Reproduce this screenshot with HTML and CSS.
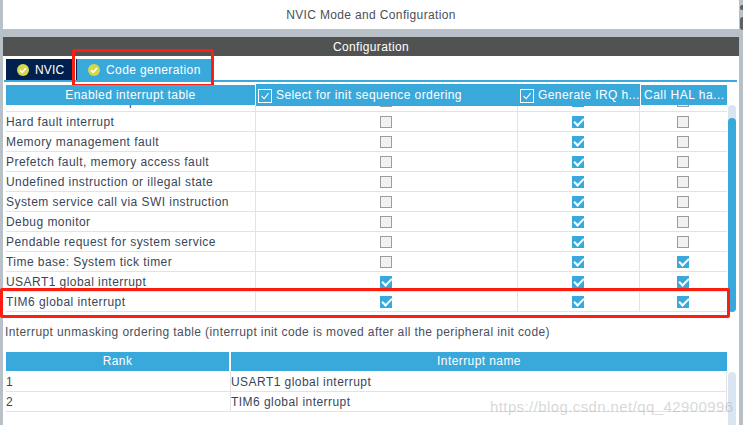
FILE: index.html
```html
<!DOCTYPE html>
<html lang="en">
<head>
<meta charset="utf-8">
<title>NVIC Mode and Configuration</title>
<link rel="stylesheet" href="styles.css">
</head>
<body>
<div class="window">
  <div class="title">NVIC Mode and Configuration</div>
  <div class="panel">
  <div class="config-bar">Configuration</div>
  <div class="tabs">
    <div class="tab tab-dark"><span class="ok"><svg viewBox="0 0 12 12"><path d="M3 6.2 5.2 8.4 9 4" /></svg></span>NVIC</div>
    <div class="tab tab-blue"><span class="ok"><svg viewBox="0 0 12 12"><path d="M3 6.2 5.2 8.4 9 4" /></svg></span>Code generation</div>
  </div>
  <div class="table-wrap">
    <div class="grid head">
      <div class="hcell center first">Enabled interrupt table</div>
      <div class="hcell wide"><span class="hbox"><svg viewBox="0 0 14 14"><path d="M3 7.2 6 10.2 11.2 3.6"/></svg></span>Select for init sequence ordering</div>
      <div class="hcell wide"><span class="hbox"><svg viewBox="0 0 14 14"><path d="M3 7.2 6 10.2 11.2 3.6"/></svg></span>Generate IRQ h...</div>
      <div class="hcell last">Call HAL ha...</div>
    </div>
    <div class="body">
      <div class="grid row clipped"><div class="cell">Non maskable interrupt</div><div class="cell mid"><i class="cb"></i></div><div class="cell mid"><i class="cb on"></i></div><div class="cell mid"><i class="cb"></i></div></div>
      <div class="grid row"><div class="cell">Hard fault interrupt</div><div class="cell mid"><i class="cb"></i></div><div class="cell mid"><i class="cb on"></i></div><div class="cell mid"><i class="cb"></i></div></div>
      <div class="grid row"><div class="cell">Memory management fault</div><div class="cell mid"><i class="cb"></i></div><div class="cell mid"><i class="cb on"></i></div><div class="cell mid"><i class="cb"></i></div></div>
      <div class="grid row"><div class="cell">Prefetch fault, memory access fault</div><div class="cell mid"><i class="cb"></i></div><div class="cell mid"><i class="cb on"></i></div><div class="cell mid"><i class="cb"></i></div></div>
      <div class="grid row"><div class="cell">Undefined instruction or illegal state</div><div class="cell mid"><i class="cb"></i></div><div class="cell mid"><i class="cb on"></i></div><div class="cell mid"><i class="cb"></i></div></div>
      <div class="grid row"><div class="cell">System service call via SWI instruction</div><div class="cell mid"><i class="cb"></i></div><div class="cell mid"><i class="cb on"></i></div><div class="cell mid"><i class="cb"></i></div></div>
      <div class="grid row"><div class="cell">Debug monitor</div><div class="cell mid"><i class="cb"></i></div><div class="cell mid"><i class="cb on"></i></div><div class="cell mid"><i class="cb"></i></div></div>
      <div class="grid row"><div class="cell">Pendable request for system service</div><div class="cell mid"><i class="cb"></i></div><div class="cell mid"><i class="cb on"></i></div><div class="cell mid"><i class="cb"></i></div></div>
      <div class="grid row"><div class="cell">Time base: System tick timer</div><div class="cell mid"><i class="cb"></i></div><div class="cell mid"><i class="cb on"></i></div><div class="cell mid"><i class="cb on"></i></div></div>
      <div class="grid row"><div class="cell">USART1 global interrupt</div><div class="cell mid"><i class="cb on"></i></div><div class="cell mid"><i class="cb on"></i></div><div class="cell mid"><i class="cb on"></i></div></div>
      <div class="grid row"><div class="cell">TIM6 global interrupt</div><div class="cell mid"><i class="cb on"></i></div><div class="cell mid"><i class="cb on"></i></div><div class="cell mid"><i class="cb on"></i></div></div>
    </div>
    <div class="scroll-track"><div class="scroll-thumb"></div></div>
  </div>
  <div class="note">Interrupt unmasking ordering table (interrupt init code is moved after all the peripheral init code)</div>
  <div class="rank-wrap">
    <div class="rank-grid rank-head"><div class="hcell center">Rank</div><div class="hcell center">Interrupt name</div></div>
    <div class="rank-grid rank-row"><div class="cell">1</div><div class="cell">USART1 global interrupt</div></div>
    <div class="rank-grid rank-row"><div class="cell">2</div><div class="cell">TIM6 global interrupt</div></div>
    <div class="rank-track"></div>
  </div>
  </div>
</div>
<div class="edge edge-a"></div>
<div class="edge edge-b"></div>
<div class="mark mark-tab"></div>
<div class="mark mark-row"></div>
<div class="watermark">https://blog.csdn.net/qq_42900996</div>
</body>
</html>
```
FILE: styles.css
```css
* { box-sizing: border-box; }
html, body { margin: 0; height: 100%; overflow: hidden; }
body {
  position: relative;
  width: 743px;
  height: 425px;
  background: #b8c1c7;
  font-family: "Liberation Sans", Arial, sans-serif;
  font-size: 12px;
  letter-spacing: 0.45px;
  color: #39465a;
}
.window { margin-left: 3px; width: 736px; height: 425px; }
.title {
  height: 29px;
  background: #fff;
  margin-bottom: 8px;
  text-align: center;
  line-height: 30px;
  color: #4a4f5c;
  letter-spacing: 0.35px;
}
.panel { background: #fff; height: 388px; }
.config-bar {
  height: 19px;
  background: #515352;
  color: #fff;
  text-align: center;
  line-height: 20px;
  letter-spacing: 0.35px;
}
.tabs {
  display: flex;
  height: 26px;
  padding: 3px 0 0 2px;
  border-bottom: 2px solid #39a9dc;
  margin: 0 2px 0 1px;
}
.tab {
  display: flex;
  align-items: center;
  height: 21px;
  color: #fff;
  padding-left: 11px;
}
.tab-dark { width: 66px; background: #02204f; letter-spacing: 0.2px; }
.tab-blue { width: 135px; background: #39a9dc; margin-left: 5px; letter-spacing: 0.4px; box-shadow: -1px 0 0 #02204f; }
.ok {
  width: 12px; height: 12px; border-radius: 50%;
  background: #d5d84a;
  margin-right: 6px;
  display: flex;
}
.ok svg { width: 12px; height: 12px; }
.ok path { fill: none; stroke: #fff; stroke-width: 1.6; }
.table-wrap { position: relative; height: 228px; margin-top: 2px; }
.grid {
  display: grid;
  grid-template-columns: 250px 262px 122px 87px;
  margin-left: 3px;
  width: 721px;
}
.head { height: 21px; position: relative; z-index: 2; }
.hcell {
  background: #39a9dc;
  color: #fff;
  display: flex;
  align-items: center;
  line-height: 19px;
  letter-spacing: 0.42px;
  white-space: nowrap;
}
.hcell.center { justify-content: center; }
.hcell.first { margin: 1px 1px 1px 0; padding-top: 1px; }
.hcell.wide { padding-left: 2px; padding-top: 1px; }
.hcell.last { margin: 1px 0 1px 1px; padding: 1px 0 0 3px; letter-spacing: 0.5px; }
.hbox {
  width: 14px; height: 14px;
  border: 1px solid #fff;
  margin-right: 4px;
  display: flex;
  flex: none;
}
.hbox svg { width: 12px; height: 12px; }
.hbox path { fill: none; stroke: #fff; stroke-width: 1.3; }
.row { height: 20px; border-bottom: 1px solid #e3e3e3; }
.clipped { height: 7px; overflow: hidden; align-items: end; }
.cell {
  height: 19px;
  display: flex;
  align-items: center;
  white-space: nowrap;
  border-right: 1px solid #e3e3e3;
}
.clipped .cell { height: 6px; overflow: hidden; align-items: flex-end; line-height: 19px; }
.cell.mid { justify-content: center; padding-right: 1px; }
.grid .cell:last-child { border-right: 0; }
.cb {
  display: block;
  width: 12px; height: 12px;
  background: #f0f1f3;
  border: 1px solid #9a9da0;
  flex: none;
}
.clipped .cb { margin-bottom: 4px; }
.cb.on {
  border: 0;
  background: #39a9dc;
  position: relative;
}
.cb.on::after {
  content: "";
  position: absolute;
  left: 2px; top: 2px;
  width: 8px; height: 4px;
  border-left: 2px solid #fff;
  border-bottom: 2px solid #fff;
  transform: rotate(-45deg);
}
.scroll-track {
  position: absolute;
  top: 21px;
  left: 725px;
  width: 8px;
  height: 207px;
  background: #d9e6f2;
  border-radius: 4px;
}
.scroll-thumb {
  margin-top: 13px;
  height: 194px;
  background: #39a9dc;
  border-radius: 4px;
}
.note {
  height: 40px;
  padding: 10px 0 0 2px;
  line-height: 20px;
  color: #4a4f5c;
  letter-spacing: 0.4px;
}
.rank-wrap { position: relative; }
.rank-grid {
  display: grid;
  grid-template-columns: 225px 496px;
  margin-left: 3px;
  width: 721px;
}
.rank-head { height: 20px; }
.rank-head .hcell { margin: 0 2px 1px 0; }
.rank-head .hcell:last-child { margin-right: 0; }
.rank-row { height: 20px; border-bottom: 1px solid #e3e3e3; }
.rank-track {
  position: absolute;
  top: 20px;
  left: 725px;
  width: 8px;
  height: 53px;
  background: #d9e6f2;
  border-radius: 4px 4px 0 0;
}
.edge { position: absolute; right: 0; width: 3px; background: #5a5f63; }
.edge-a { top: 5px; height: 5px; border-radius: 3px 0 0 3px; }
.edge-b { top: 17px; height: 13px; border-radius: 3px 0 0 3px; }
.mark { position: absolute; border: 3px solid #fb1f12; border-radius: 2px; }
.mark-tab { left: 72px; top: 49px; width: 142px; height: 38px; }
.mark-row { left: 0; top: 288px; width: 730px; height: 30px; }
.watermark {
  position: absolute;
  left: 490px;
  top: 398px;
  font-size: 15px;
  letter-spacing: 0.4px;
  color: rgba(150, 155, 160, 0.4);
  white-space: nowrap;
}
```
